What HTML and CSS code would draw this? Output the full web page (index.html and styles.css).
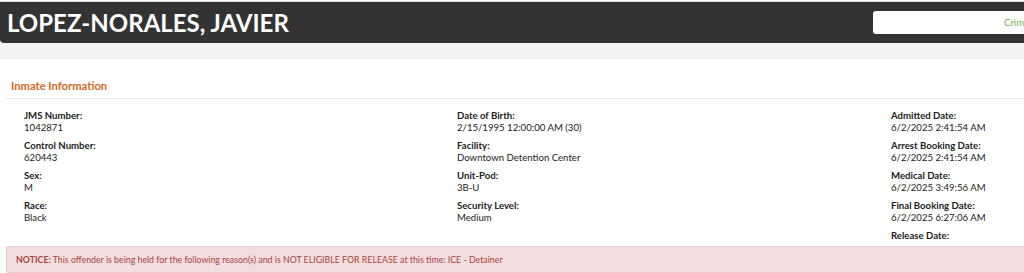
FILE: index.html
```html
<!DOCTYPE html>
<html lang="en">
<head>
    <meta charset="UTF-8">
    <meta name="viewport" content="width=device-width, initial-scale=1.0">
    <title>Inmate Information</title>
    <link rel="stylesheet" href="styles.css">
</head>
<body>
    <div class="header">
        <h1>LOPEZ-NORALES, JAVIER</h1>
        <div class="search-box"><span>Criminal Charges</span></div>
    </div>
    <div class="subbar"></div>

    <div class="panel">
        <h2>Inmate Information</h2>
        <div class="info-grid">
            <div class="col">
                <div class="field"><label>JMS Number:</label><span>1042871</span></div>
                <div class="field"><label>Control Number:</label><span>620443</span></div>
                <div class="field"><label>Sex:</label><span>M</span></div>
                <div class="field"><label>Race:</label><span>Black</span></div>
            </div>
            <div class="col">
                <div class="field"><label>Date of Birth:</label><span>2/15/1995 12:00:00 AM (30)</span></div>
                <div class="field"><label>Facility:</label><span>Downtown Detention Center</span></div>
                <div class="field"><label>Unit-Pod:</label><span>3B-U</span></div>
                <div class="field"><label>Security Level:</label><span>Medium</span></div>
            </div>
            <div class="col">
                <div class="field"><label>Admitted Date:</label><span>6/2/2025 2:41:54 AM</span></div>
                <div class="field"><label>Arrest Booking Date:</label><span>6/2/2025 2:41:54 AM</span></div>
                <div class="field"><label>Medical Date:</label><span>6/2/2025 3:49:56 AM</span></div>
                <div class="field"><label>Final Booking Date:</label><span>6/2/2025 6:27:06 AM</span></div>
                <div class="field"><label>Release Date:</label><span></span></div>
            </div>
        </div>
        <div class="notice">
            <b>NOTICE:</b> This offender is being held for the following reason(s) and is NOT ELIGIBLE FOR RELEASE at this time: ICE - Detainer
        </div>
    </div>
</body>
</html>
```

FILE: styles.css
```css
body {
    margin: 0;
    font-family: Lato, "Open Sans", sans-serif;
    color: #222;
    background: #fff;
    overflow: hidden;
}
.header {
    margin-top: 1px;
    border-top: 1px solid #ddd;
    height: 41px;
    background: #333333;
    border-radius: 0 0 0 4px;
    display: flex;
    align-items: center;
    justify-content: space-between;
    overflow: hidden;
}
.header h1 {
    margin: 0 0 1px 7px;
    font-size: 24px;
    font-weight: bold;
    color: #fff;
}
.search-box {
    width: 151px;
    height: 23px;
    margin: 0 -131px 1px 0;
    background: #fff;
    border-radius: 3px;
    display: flex;
    align-items: center;
    padding-left: 131px;
    white-space: nowrap;
    font-size: 9.6px;
    color: #72b04f;
    flex-shrink: 0;
}
.subbar {
    height: 15px;
    background: #f4f4f4;
    border-bottom: 1px solid #ececec;
}
.panel {
    padding: 20px 0 0 6px;
}
.panel h2 {
    margin: 0;
    padding: 0 0 6px 5px;
    font-size: 11.2px;
    font-weight: bold;
    color: #d2691e;
    border-bottom: 1px solid #e6e6e6;
}
.info-grid {
    display: grid;
    grid-template-columns: 433px 434px auto;
    padding: 11px 0 0 18px;
}
.field {
    display: flex;
    flex-direction: column;
    font-size: 9.6px;
    line-height: 12px;
    margin-bottom: 6px;
    min-height: 24px;
}
.field label {
    font-weight: bold;
    color: #222;
}
.field span {
    color: #222;
}
.notice {
    margin-top: -14px;
    background: #f2dede;
    border: 1px solid #ebccd1;
    border-right: none;
    border-radius: 3px 0 0 3px;
    color: #a94442;
    font-size: 8.8px;
    padding: 7px 9px;
}
```
